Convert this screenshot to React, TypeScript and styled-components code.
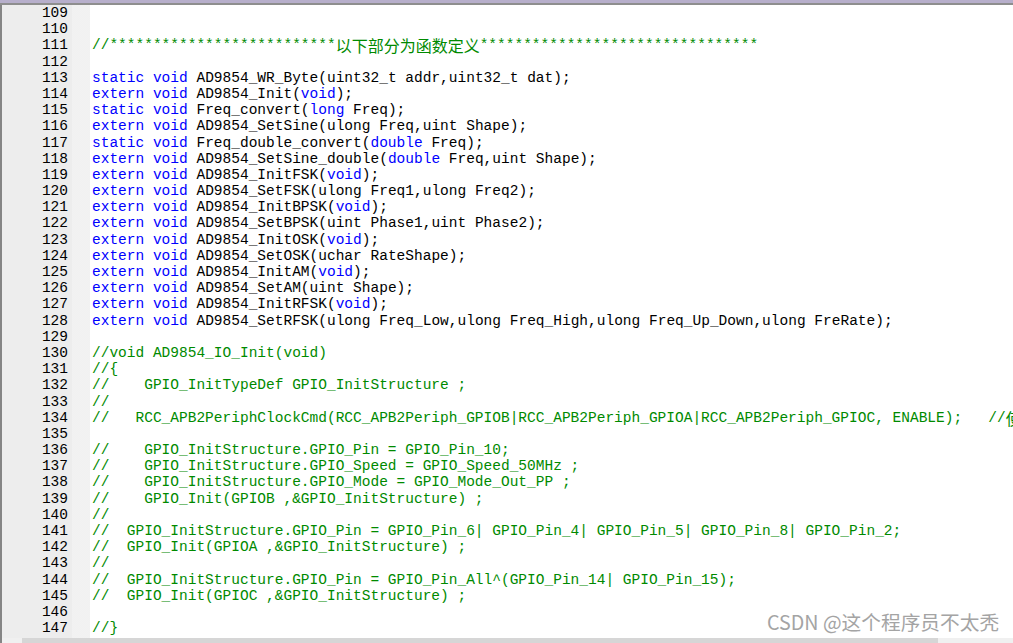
import React from "react";
import styled, { createGlobalStyle } from "styled-components";

const GlobalStyle = createGlobalStyle`
  html, body {
    margin: 0;
    padding: 0;
    background: #ffffff;
    overflow: hidden;
  }
`;

const Window = styled.div`
  position: relative;
  width: 1013px;
  height: 643px;
  display: flex;
  flex-direction: column;
  overflow: hidden;
  background: #ffffff;
`;

const TopBar = styled.div`
  height: 3px;
  flex-shrink: 0;
  background: #b7afcb;
  border-bottom: 2px solid #8e8e8e;
`;

const Editor = styled.div`
  height: 633px;
  flex-shrink: 0;
  display: flex;
  border-left: 2px solid #858585;
  font-family: "Liberation Mono", "DejaVu Sans Mono", monospace;
  font-size: 14.5px;
  overflow: hidden;
`;

const Gutter = styled.div`
  width: 66px;
  flex-shrink: 0;
  padding-right: 4px;
  background: #ededed;
  color: #000000;
  text-align: right;
`;

const MarginStrip = styled.div`
  width: 18px;
  flex-shrink: 0;
  background-color: #f6f6f6;
  background-image: radial-gradient(#ececec 0.6px, transparent 0.8px);
  background-size: 2px 2px;
`;

const Code = styled.div`
  flex: 1;
  min-width: 0;
  padding-left: 2px;
  overflow: hidden;
`;

const Line = styled.div`
  height: 16.2px;
  line-height: 16.2px;
  white-space: pre;
`;

const Tok = styled.span<{ $kind: "kw" | "plain" | "comment" }>`
  color: ${(p) =>
    p.$kind === "kw" ? "#0000ff" : p.$kind === "comment" ? "#008a00" : "#000000"};
`;

const Cjk = styled.span`
  font-family: "Noto Sans CJK SC", sans-serif;
  font-size: 16px;
  line-height: 16.2px;
  vertical-align: top;
`;

const Scrollbar = styled.div`
  height: 17px;
  flex-shrink: 0;
  display: flex;
  background: #f0f0f0;
`;

const ScrollButton = styled.div`
  width: 20px;
  border-left: 2px solid #858585;
  background: #f0f0f0;
`;

const ScrollThumb = styled.div`
  width: 916px;
  background: #d6d6d6;
`;

const ScrollTrack = styled.div`
  flex: 1;
  background: #f0f0f0;
`;

const Watermark = styled.div`
  position: absolute;
  left: 767px;
  top: 609px;
  font-family: "Noto Sans CJK SC", "Noto Sans", sans-serif;
  font-size: 19.7px;
  line-height: 26px;
  color: #a4a4a4;
  white-space: nowrap;
`;

const LINES: string[] = [
  "",
  "",
  "//**************************以下部分为函数定义********************************",
  "",
  "static void AD9854_WR_Byte(uint32_t addr,uint32_t dat);",
  "extern void AD9854_Init(void);",
  "static void Freq_convert(long Freq);",
  "extern void AD9854_SetSine(ulong Freq,uint Shape);",
  "static void Freq_double_convert(double Freq);",
  "extern void AD9854_SetSine_double(double Freq,uint Shape);",
  "extern void AD9854_InitFSK(void);",
  "extern void AD9854_SetFSK(ulong Freq1,ulong Freq2);",
  "extern void AD9854_InitBPSK(void);",
  "extern void AD9854_SetBPSK(uint Phase1,uint Phase2);",
  "extern void AD9854_InitOSK(void);",
  "extern void AD9854_SetOSK(uchar RateShape);",
  "extern void AD9854_InitAM(void);",
  "extern void AD9854_SetAM(uint Shape);",
  "extern void AD9854_InitRFSK(void);",
  "extern void AD9854_SetRFSK(ulong Freq_Low,ulong Freq_High,ulong Freq_Up_Down,ulong FreRate);",
  "",
  "//void AD9854_IO_Init(void)",
  "//{",
  "//    GPIO_InitTypeDef GPIO_InitStructure ;",
  "//",
  "//   RCC_APB2PeriphClockCmd(RCC_APB2Periph_GPIOB|RCC_APB2Periph_GPIOA|RCC_APB2Periph_GPIOC, ENABLE);   //使能端口时钟",
  "",
  "//    GPIO_InitStructure.GPIO_Pin = GPIO_Pin_10;",
  "//    GPIO_InitStructure.GPIO_Speed = GPIO_Speed_50MHz ;",
  "//    GPIO_InitStructure.GPIO_Mode = GPIO_Mode_Out_PP ;",
  "//    GPIO_Init(GPIOB ,&GPIO_InitStructure) ;",
  "//",
  "//  GPIO_InitStructure.GPIO_Pin = GPIO_Pin_6| GPIO_Pin_4| GPIO_Pin_5| GPIO_Pin_8| GPIO_Pin_2;",
  "//  GPIO_Init(GPIOA ,&GPIO_InitStructure) ;",
  "//",
  "//  GPIO_InitStructure.GPIO_Pin = GPIO_Pin_All^(GPIO_Pin_14| GPIO_Pin_15);",
  "//  GPIO_Init(GPIOC ,&GPIO_InitStructure) ;",
  "",
  "//}",
];

const KEYWORDS = new Set(["static", "void", "extern", "long", "double"]);

function renderCjkSplit(text: string, keyPrefix: string) {
  const parts = text.split(/([\u4e00-\u9fff]+)/);
  return parts.map((p, i) =>
    /[\u4e00-\u9fff]/.test(p) ? (
      <Cjk key={keyPrefix + i}>{p}</Cjk>
    ) : (
      <React.Fragment key={keyPrefix + i}>{p}</React.Fragment>
    )
  );
}

function renderLine(text: string) {
  if (text.startsWith("//")) {
    return <Tok $kind="comment">{renderCjkSplit(text, "c")}</Tok>;
  }
  const parts = text.split(/(\b[A-Za-z_][A-Za-z0-9_]*\b)/);
  return parts.map((p, i) =>
    KEYWORDS.has(p) ? (
      <Tok key={i} $kind="kw">
        {p}
      </Tok>
    ) : (
      <Tok key={i} $kind="plain">
        {p}
      </Tok>
    )
  );
}

export default function App() {
  return (
    <>
      <GlobalStyle />
      <Window>
        <TopBar />
        <Editor>
          <Gutter>
            {LINES.map((_, i) => (
              <Line key={i}>{109 + i}</Line>
            ))}
          </Gutter>
          <MarginStrip />
          <Code>
            {LINES.map((l, i) => (
              <Line key={i}>{renderLine(l)}</Line>
            ))}
          </Code>
        </Editor>
        <Scrollbar>
          <ScrollButton />
          <ScrollThumb />
          <ScrollTrack />
        </Scrollbar>
        <Watermark>CSDN @这个程序员不太秃</Watermark>
      </Window>
    </>
  );
}
